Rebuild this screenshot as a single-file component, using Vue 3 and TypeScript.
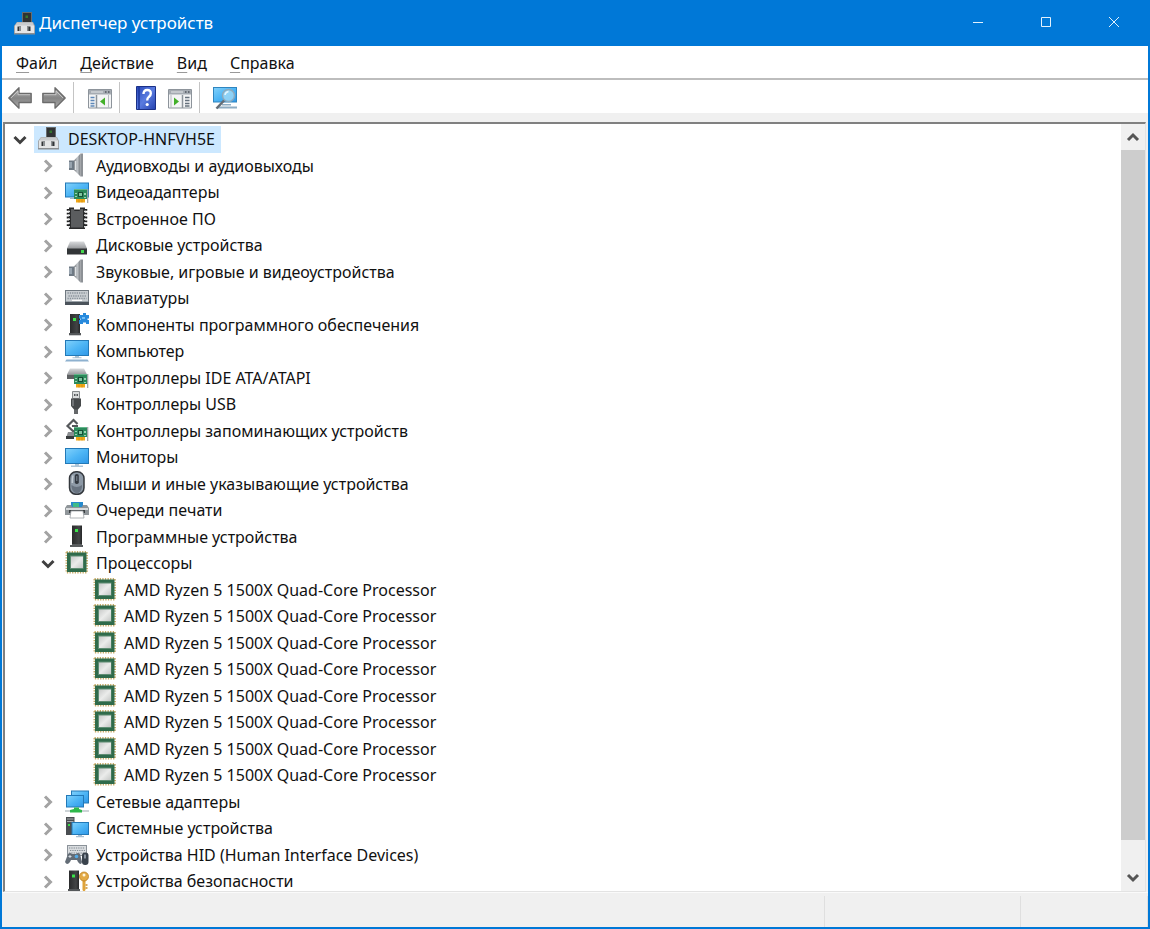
<script setup lang="ts">
import { computed, ref } from 'vue'

interface Category {
  label: string
  icon: string
  children?: string[]
}

interface Row {
  key: string
  label: string
  icon: string
  level: number
  expandable: boolean
  expanded: boolean
}

const rootName = 'DESKTOP-HNFVH5E'
const cpuName = 'AMD Ryzen 5 1500X Quad-Core Processor'

const categories: Category[] = [
  { label: 'Аудиовходы и аудиовыходы', icon: 'speaker' },
  { label: 'Видеоадаптеры', icon: 'video' },
  { label: 'Встроенное ПО', icon: 'firmware' },
  { label: 'Дисковые устройства', icon: 'disk' },
  { label: 'Звуковые, игровые и видеоустройства', icon: 'speaker' },
  { label: 'Клавиатуры', icon: 'keyboard' },
  { label: 'Компоненты программного обеспечения', icon: 'component' },
  { label: 'Компьютер', icon: 'computer' },
  { label: 'Контроллеры IDE ATA/ATAPI', icon: 'ide' },
  { label: 'Контроллеры USB', icon: 'usb' },
  { label: 'Контроллеры запоминающих устройств', icon: 'storage' },
  { label: 'Мониторы', icon: 'monitor' },
  { label: 'Мыши и иные указывающие устройства', icon: 'mouse' },
  { label: 'Очереди печати', icon: 'printer' },
  { label: 'Программные устройства', icon: 'software' },
  { label: 'Процессоры', icon: 'cpu', children: Array.from({ length: 8 }, () => cpuName) },
  { label: 'Сетевые адаптеры', icon: 'network' },
  { label: 'Системные устройства', icon: 'system' },
  { label: 'Устройства HID (Human Interface Devices)', icon: 'hid' },
  { label: 'Устройства безопасности', icon: 'security' },
]

const menus = [
  { key: 'Ф', rest: 'айл' },
  { key: 'Д', rest: 'ействие' },
  { key: 'В', rest: 'ид' },
  { key: 'С', rest: 'правка' },
]

const open = ref<Set<string>>(new Set(['root', 'Процессоры']))
const selected = ref('root')
const viewport = ref<HTMLElement | null>(null)

const rows = computed<Row[]>(() => {
  const rootOpen = open.value.has('root')
  const list: Row[] = [
    { key: 'root', label: rootName, icon: 'root', level: 0, expandable: true, expanded: rootOpen },
  ]
  if (!rootOpen) return list
  for (const c of categories) {
    const expanded = open.value.has(c.label)
    list.push({ key: c.label, label: c.label, icon: c.icon, level: 1, expandable: true, expanded })
    if (expanded && c.children) {
      c.children.forEach((name, i) =>
        list.push({ key: `${c.label}-${i}`, label: name, icon: c.icon, level: 2, expandable: false, expanded: false }),
      )
    }
  }
  return list
})

function toggle(key: string): void {
  const next = new Set(open.value)
  if (next.has(key)) next.delete(key)
  else next.add(key)
  open.value = next
}

function scrollTree(delta: number): void {
  viewport.value?.scrollBy({ top: delta })
}
</script>

<template>
  <svg class="defs" aria-hidden="true">
    <defs>
      <linearGradient id="g-screen" x1="0" y1="0" x2="1" y2="1">
        <stop offset="0" stop-color="#7fd0fb" />
        <stop offset="0.5" stop-color="#4db5f5" />
        <stop offset="1" stop-color="#3199e8" />
      </linearGradient>
      <linearGradient id="g-metal" x1="0" y1="0" x2="1" y2="0">
        <stop offset="0" stop-color="#6f7378" />
        <stop offset="0.5" stop-color="#c3c7cb" />
        <stop offset="1" stop-color="#74787d" />
      </linearGradient>
      <linearGradient id="g-plate" x1="0" y1="0" x2="0" y2="1">
        <stop offset="0" stop-color="#d9dbdd" />
        <stop offset="1" stop-color="#97999c" />
      </linearGradient>
      <linearGradient id="g-die" x1="0" y1="0" x2="1" y2="1">
        <stop offset="0" stop-color="#c8cac9" />
        <stop offset="0.5" stop-color="#ebeceb" />
        <stop offset="1" stop-color="#c4c7c5" />
      </linearGradient>
      <linearGradient id="g-tower" x1="0" y1="0" x2="1" y2="0">
        <stop offset="0" stop-color="#2a2b2c" />
        <stop offset="0.7" stop-color="#434546" />
        <stop offset="1" stop-color="#252627" />
      </linearGradient>
      <linearGradient id="g-arrow" x1="0" y1="0" x2="0" y2="1">
        <stop offset="0" stop-color="#b8b8b8" />
        <stop offset="0.5" stop-color="#858585" />
        <stop offset="1" stop-color="#a9a9a9" />
      </linearGradient>
      <linearGradient id="g-help" x1="0" y1="0" x2="1" y2="1">
        <stop offset="0" stop-color="#2646b8" />
        <stop offset="0.5" stop-color="#5a7ce0" />
        <stop offset="1" stop-color="#2340ad" />
      </linearGradient>
    </defs>

    <symbol id="i-card" viewBox="0 0 15 14">
      <path d="M0 0h13v10H0z" fill="#2c8a5b" />
      <path d="M0 0h13v1H0z" fill="#63b68b" />
      <path d="M4 3h5v5H4z" fill="#174f37" />
      <path d="M5 4h3v3H5z" fill="#7ec6a0" />
      <path d="M1 4h2v1H1zM1 7h2v1H1zM10 4h2v2h-2zM10 8h2v1h-2z" fill="#9bd2b2" />
      <path d="M2 10h9v3.500H2z" fill="#f0a818" />
      <path d="M5 10.500v3M8 10.500v3" stroke="#cf860c" stroke-width=".7" />
      <path d="M13.700 0v14" stroke="#9a9da0" stroke-width="1.200" />
    </symbol>

    <symbol id="i-root" viewBox="0 0 24 24">
      <path d="M9 1h10v12H9z" fill="#6a6d6e" />
      <path d="M10 2h8v11h-8z" fill="#303334" />
      <path d="M12.500 4.500h2.500v2.500h-2.500z" fill="#35772f" />
      <path d="M4 11h16l2 4v8H1v-8z" fill="#a4a8ab" />
      <path d="M4 11.500h15.500L21 15H2z" fill="#c9ccce" />
      <path d="M2 14.500h19V22H2z" fill="#e3e5e6" />
      <path d="M1 22h21v1.500H1z" fill="#8a8e91" />
      <path d="M4.500 15.500h3.500V20H4.500zM14 15.500h3.500V20H14z" fill="#303437" />
      <path d="M6 15.500h2V20H6zM14 15.500h1.500V20H14z" fill="#8b8f92" />
    </symbol>

    <symbol id="i-speaker" viewBox="0 0 24 24">
      <path d="M4 7.500h5v9.500H4z" fill="#6e7984" />
      <path d="M4 9h3v6H4z" fill="#98a4af" />
      <path d="M9 7.500 15.500.5v23L9 17z" fill="url(#g-metal)" />
      <path d="M15.500.5H18v23h-2.500z" fill="#8d9196" />
      <path d="M10.500 8v9" stroke="#dfe3e6" stroke-width="1.500" />
    </symbol>

    <symbol id="i-monitor" viewBox="0 0 24 24">
      <path d="M0 4h24v16H0z" fill="#2379b7" />
      <path d="M1 5h22v14H1z" fill="url(#g-screen)" />
      <path d="M10 20h4v1.500h4V23H6v-1.500h4z" fill="#adc5d8" />
    </symbol>

    <symbol id="i-computer" viewBox="0 0 24 24">
      <path d="M0 2h24v16H0z" fill="#2379b7" />
      <path d="M1 3h22v14H1z" fill="url(#g-screen)" />
      <path d="M10 18h4v1.200h2.500v1H7.500v-1H10z" fill="#a9bfd1" />
      <path d="M1.500 21.500h21l1.500 2H0z" fill="#8eb1cf" />
    </symbol>

    <symbol id="i-video" viewBox="0 0 24 24">
      <path d="M0 3.500h24v15H0z" fill="#2379b7" />
      <path d="M1 4.500h22v13H1z" fill="url(#g-screen)" />
      <path d="M5 19h5v1H5z" fill="#9eb9cc" />
      <use href="#i-card" x="9" y="10" width="15" height="14" />
    </symbol>

    <symbol id="i-firmware" viewBox="0 0 24 24">
      <path d="M4 1.500h5v2h6v-2h5V23H4z" fill="#2a2b2c" />
      <path d="M6 3h2.500l1 2h5l1-2H18v18.500H6z" fill="#5b5d5f" />
      <path d="M3 3v19M21 3v19" fill="none" stroke="#202122" stroke-width="2.500" stroke-dasharray="1.800 2" />
      <path d="M4 4.800v17M20 4.800v17" fill="none" stroke="#e3e5e6" stroke-width="2" stroke-dasharray="1.500 2.300" />
    </symbol>

    <symbol id="i-disk" viewBox="0 0 24 24">
      <path d="M5 9.500h14l3 7H2z" fill="url(#g-plate)" />
      <path d="M2 16h20v6.500H2z" fill="#323537" />
      <path d="M2 16h20v1H2z" fill="#66696b" />
      <path d="M16 18h3v3h-3z" fill="#44d84e" />
    </symbol>

    <symbol id="i-keyboard" viewBox="0 0 24 24">
      <path d="M0 5h24v15H0z" fill="#6f7880" />
      <path d="M1 6h22v10.500H1z" fill="#c9ced2" />
      <path d="M2.500 8h19M3.500 11h17.500M2.500 13.500h19" stroke="#8a939b" stroke-width="1.300" stroke-dasharray="1.300 1" />
      <path d="M7 14.700h10v1.300H7z" fill="#fff" />
      <path d="M0 17h24v3H0z" fill="#4b535b" />
    </symbol>

    <symbol id="i-software" viewBox="0 0 24 24">
      <path d="M7 1.500h10V21H7z" fill="url(#g-tower)" />
      <path d="M5 21h2v-1h10v1h1v2H5z" fill="#595c5e" />
      <path d="M10 5h3v3h-3z" fill="#3be34a" />
    </symbol>

    <symbol id="i-component" viewBox="0 0 24 24">
      <path d="M5 2h10v19H5z" fill="url(#g-tower)" />
      <path d="M4 21h12v2.300H4z" fill="#55585a" />
      <path d="M8 6h3v3H8z" fill="#3be34a" />
      <path d="M14 3h4V1h3v2h3v3.500h-1.500V8H24v4h-3v-1.500h-3V12h-4V8h1.500V6.500H14z" fill="#2789dc" />
      <path d="M17 5h3v2h-3z" fill="#6fbcf4" />
    </symbol>

    <symbol id="i-ide" viewBox="0 0 24 24">
      <path d="M5 3.500h14l3 6H2z" fill="url(#g-plate)" />
      <path d="M2 9.500h20V14H2z" fill="#5d6062" />
      <use href="#i-card" x="9" y="9" width="15" height="14" />
    </symbol>

    <symbol id="i-usb" viewBox="0 0 24 24">
      <path d="M7.500.5h7v7h-7z" fill="#dadcdd" stroke="#85898b" />
      <path d="M9 3h1.500v2H9zM11.500 3H13v2h-1.500z" fill="#55585a" />
      <path d="M6 7.500h10V15l-3 3.500V23H9v-4.500L6 15z" fill="#46494b" />
      <path d="M7 8.500h2V15H7z" fill="#707376" />
      <path d="M9 18.500h4V23H9z" fill="#65686a" />
    </symbol>

    <symbol id="i-storage" viewBox="0 0 24 24">
      <path d="M12.500 6 8.500 2 2.500 8l6 5.500 4-3.500" fill="none" stroke="#55585b" stroke-width="2.200" />
      <path d="M7 8h6" stroke="#55585b" stroke-width="2" />
      <path d="M3 14h6v6H1z" fill="#8b8e91" />
      <path d="M1 18h8v3H1z" fill="#383b3d" />
      <use href="#i-card" x="9" y="9" width="15" height="14" />
    </symbol>

    <symbol id="i-mouse" viewBox="0 0 24 24">
      <rect x="4.500" y=".8" width="14.500" height="22.500" rx="6.500" fill="#8d99a6" stroke="#34383d" stroke-width="1.500" />
      <path d="M6.500 14q5 4 10.500 0v2q-1 6-5.200 6t-5.300-6z" fill="#687380" />
      <path d="M8 4.500Q7 8 7.300 12" fill="none" stroke="#c1cad3" stroke-width="1.500" />
      <rect x="9.800" y="3" width="4" height="10" rx="1.800" fill="#343a42" />
      <path d="M11.800 5v5" stroke="#7f8b98" />
    </symbol>

    <symbol id="i-printer" viewBox="0 0 24 24">
      <path d="M6 5h12v5H6z" fill="#258acd" />
      <path d="M8 6h6v4H8z" fill="#40bb88" />
      <path d="M2 8h4l1 2h10l1-2h4l2 3v7H0v-7z" fill="#8f9599" />
      <path d="M1 11h22v2H1z" fill="#d7dadc" />
      <path d="M4 13h16v3H4z" fill="#3c4144" />
      <path d="M6 14h12l1 7H5z" fill="#fff" stroke="#9ca1a5" stroke-width=".8" />
    </symbol>

    <symbol id="i-cpu" viewBox="0 0 24 24">
      <rect x="1.500" y="2" width="20.500" height="20.500" fill="none" stroke="#c6aa66" stroke-width="2" stroke-dasharray="1.300 1.300" />
      <path d="M2 2.500h19.500V22H2z" fill="#2f6b4b" />
      <path d="M5 5.500h13.500V19H5z" fill="#5f8d73" />
      <path d="M6 6.500h12V18H6z" fill="url(#g-die)" />
    </symbol>

    <symbol id="i-network" viewBox="0 0 24 24">
      <path d="M6 1.500h18v13H6z" fill="#2379b7" />
      <path d="M7 2.500h16v11H7z" fill="url(#g-screen)" />
      <path d="M1 6h18v12.500H1z" fill="#2379b7" />
      <path d="M2 7h16v10.500H2z" fill="url(#g-screen)" />
      <path d="M0 21h24v2H0z" fill="#cdd4d7" />
      <path d="M9 18.500h5V20l3 1v2.500H5V21l4-1z" fill="#2eb84b" />
    </symbol>

    <symbol id="i-system" viewBox="0 0 24 24">
      <path d="M1 2h8.500v18H1z" fill="#4a4e51" />
      <path d="M2 4h6.500M2 6.500h6.500" stroke="#a6abaf" />
      <path d="M3 9h2v2H3z" fill="#39dc49" />
      <path d="M6.500 7H24v13H6.500z" fill="#2379b7" />
      <path d="M7.500 8H23v11H7.500z" fill="url(#g-screen)" />
      <path d="M13 20h4v1h2v1.200h-8V21h2z" fill="#a9bfd1" />
    </symbol>

    <symbol id="i-hid" viewBox="0 0 24 24">
      <path d="M2 3h20v11H2z" fill="#8b9299" />
      <path d="M3 4h18v9H3z" fill="#d9dcdf" />
      <path d="M4 6h16M5 8.500h15M4 11h16" stroke="#838b93" stroke-width="1.200" stroke-dasharray="1.300 1" />
      <path d="M3 12q2-2 4 0h4q2-2 4 0l2 8q-1 4-4 0l-1-2H6l-1 2q-3 4-5 0z" fill="#636c76" />
      <path d="M3.500 14.500h3M5 13v3" stroke="#d5dbe1" />
      <circle cx="11.500" cy="14.500" r="1.800" fill="#53a9e5" />
      <rect x="17" y="10.500" width="6.500" height="12.500" rx="3" fill="#39424c" />
      <path d="M20 12.500v4" stroke="#a3aeb9" stroke-width="1.500" />
    </symbol>

    <symbol id="i-security" viewBox="0 0 24 24">
      <path d="M4 2.500h10V22H4z" fill="url(#g-tower)" />
      <path d="M3 21h12v2H3z" fill="#55585a" />
      <path d="M7 6.500h3v3H7z" fill="#3be34a" />
      <path d="M17.500 11h3v11l-1.500 2-1.500-2z" fill="#e0a43a" />
      <circle cx="19" cy="8.500" r="4.500" fill="#e3aa46" stroke="#bd7f20" stroke-width=".8" />
      <circle cx="19" cy="7" r="1.500" fill="#fff6df" />
      <path d="M20.500 17h2M20.500 20h2" stroke="#c98d29" stroke-width="1.500" />
    </symbol>

    <symbol id="i-back" viewBox="0 0 24 24">
      <path d="M.8 12 11 1.800V7.500h12.200v9H11v5.700z" fill="url(#g-arrow)" stroke="#6b6b6b" stroke-width="1.300" stroke-linejoin="round" />
      <path d="M3 12l7-7v3.700h12" fill="none" stroke="#d0d0d0" stroke-width=".8" />
    </symbol>

    <symbol id="i-panel" viewBox="0 0 24 24">
      <path d="M.5 3.500h23v18.500H.5z" fill="#f4f5f6" stroke="#8d949b" />
      <path d="M1 4h22v4.500H1z" fill="#a5abb2" />
      <path d="M3 6h12" stroke="#e4e7e9" />
      <path d="M17 6h1.500M20 6h1.500" stroke="#4f565e" stroke-width="1.500" />
      <path d="M8.500 9v13" stroke="#8d949b" stroke-width="1.500" />
      <path d="M2.500 11.500h4M2.500 14.500h4M2.500 17.500h4M2.500 20h4" stroke="#5c87b8" stroke-width="1.300" />
      <path d="M17 11.500v8l-5-4z" fill="#43b02a" />
      <path d="M20.500 9v13" stroke="#b7bcc1" />
    </symbol>

    <symbol id="i-panel-right" viewBox="0 0 24 24">
      <path d="M.5 3.500h23v18.500H.5z" fill="#f4f5f6" stroke="#8d949b" />
      <path d="M1 4h22v4.500H1z" fill="#a5abb2" />
      <path d="M3 6h12" stroke="#e4e7e9" />
      <path d="M17 6h1.500M20 6h1.500" stroke="#4f565e" stroke-width="1.500" />
      <path d="M14.500 9v13" stroke="#8d949b" stroke-width="1.500" />
      <path d="M17 11.500h4.500M17 14.500h4.500M17 17.500h4.500M17 20h4.500" stroke="#65717c" stroke-width="1.300" />
      <path d="M6 11.500v8l5-4z" fill="#43b02a" />
      <path d="M3 9v13" stroke="#b7bcc1" />
    </symbol>

    <symbol id="i-help" viewBox="0 0 24 24">
      <path d="M2.500.5h19v23h-19z" fill="url(#g-help)" stroke="#1b3188" />
      <path d="M5 1v22" stroke="#1d379d" stroke-width="1.500" />
      <path d="M9.500 8q0-4 3.700-4t3.600 3.500q0 2-2 3.400-1.600 1.200-1.600 3.600" fill="none" stroke="#fff" stroke-width="2.400" />
      <circle cx="13.200" cy="18.500" r="1.600" fill="#fff" />
    </symbol>

    <symbol id="i-scan" viewBox="0 0 24 24">
      <path d="M0 1h24v15.500H0z" fill="#2f85bf" />
      <path d="M1 2h22v13.500H1z" fill="url(#g-screen)" />
      <path d="M9 18h9v1.500H9zM5 20.500h19v2H3z" fill="#8eacc2" />
      <path d="m11.500 14-8 8.500" stroke="#646d76" stroke-width="2.500" />
      <circle cx="15.500" cy="9.500" r="6" fill="#a5ddf8" fill-opacity=".75" stroke="#8daabd" stroke-width="1.500" />
      <path d="M12 9q.5-3 3.500-3.500" fill="none" stroke="#e4f6ff" stroke-width="1.500" />
    </symbol>
  </svg>

  <div class="window">
    <header class="titlebar">
      <svg class="icon" aria-hidden="true"><use href="#i-root" /></svg>
      <h1 class="title">Диспетчер устройств</h1>
      <div class="controls">
        <button type="button" aria-label="Свернуть">
          <svg viewBox="0 0 12 12"><path d="M1 6.500h10" /></svg>
        </button>
        <button type="button" aria-label="Развернуть">
          <svg viewBox="0 0 12 12"><path d="M1.500 1.500h9v9h-9z" /></svg>
        </button>
        <button type="button" aria-label="Закрыть">
          <svg viewBox="0 0 12 12"><path d="m1 1 10 10M11 1 1 11" /></svg>
        </button>
      </div>
    </header>

    <nav class="menubar">
      <button v-for="m in menus" :key="m.key" type="button"><span class="access">{{ m.key }}</span>{{ m.rest }}</button>
    </nav>

    <div class="toolbar" role="toolbar">
      <div class="group first">
        <button type="button" aria-label="Назад"><svg class="icon"><use href="#i-back" /></svg></button>
        <button type="button" aria-label="Вперёд"><svg class="icon flip"><use href="#i-back" /></svg></button>
      </div>
      <div class="group">
        <button type="button" aria-label="Показать дерево консоли"><svg class="icon"><use href="#i-panel" /></svg></button>
      </div>
      <div class="group">
        <button type="button" aria-label="Справка"><svg class="icon"><use href="#i-help" /></svg></button>
        <button type="button" aria-label="Показать панель действий"><svg class="icon"><use href="#i-panel-right" /></svg></button>
      </div>
      <div class="group last">
        <button type="button" aria-label="Обновить конфигурацию оборудования"><svg class="icon"><use href="#i-scan" /></svg></button>
      </div>
    </div>

    <main class="pane">
      <ul ref="viewport" class="tree" role="tree">
        <li
          v-for="row in rows"
          :key="row.key"
          class="row"
          :class="'level-' + row.level"
          role="treeitem"
          :aria-level="row.level + 1"
          :aria-expanded="row.expandable ? row.expanded : undefined"
          :aria-selected="selected === row.key"
        >
          <button
            v-if="row.expandable"
            type="button"
            class="expander"
            :class="{ expanded: row.expanded }"
            :aria-label="row.expanded ? 'Свернуть' : 'Развернуть'"
            @click="toggle(row.key)"
          >
            <svg v-if="row.expanded" viewBox="0 0 14 14"><path d="m1.500 4 5.500 5.500L12.500 4" /></svg>
            <svg v-else viewBox="0 0 14 14"><path d="m4 1.500 5.500 5.500L4 12.500" /></svg>
          </button>
          <span v-else class="expander"></span>
          <button type="button" class="item" :class="{ selected: selected === row.key }" @click="selected = row.key">
            <svg class="icon" aria-hidden="true"><use :href="'#i-' + row.icon" /></svg>
            <span>{{ row.label }}</span>
          </button>
        </li>
      </ul>
      <div class="scrollbar">
        <button type="button" aria-label="Вверх" @click="scrollTree(-53)">
          <svg viewBox="0 0 14 14"><path d="m2 10 5-5 5 5" /></svg>
        </button>
        <div class="track"><div class="thumb"></div></div>
        <button type="button" aria-label="Вниз" @click="scrollTree(53)">
          <svg viewBox="0 0 14 14"><path d="m2 4 5 5 5-5" /></svg>
        </button>
      </div>
    </main>

    <footer class="statusbar">
      <div class="status-main"></div>
      <div class="status-mid"></div>
      <div class="status-end"></div>
    </footer>
  </div>
</template>

<style>
html,
body,
#app {
  height: 100%;
  margin: 0;
}
</style>

<style scoped>
.defs {
  position: absolute;
  width: 0;
  height: 0;
}

.window {
  box-sizing: border-box;
  height: 100%;
  display: flex;
  flex-direction: column;
  overflow: hidden;
  border: 2px solid #0078d7;
  border-top: 0;
  background: #f0f0f0;
  color: #111;
  font-family: 'Noto Sans', 'Open Sans', sans-serif;
  font-size: 16px;
  line-height: 24px;
}

button {
  margin: 0;
  padding: 0;
  border: 0;
  background: none;
  color: inherit;
  font: inherit;
}

.icon {
  display: block;
  flex: none;
  width: 24px;
  height: 24px;
}

.flip {
  transform: scaleX(-1);
}

.titlebar {
  flex: none;
  display: flex;
  align-items: center;
  height: 46px;
  padding-left: 11px;
  background: #0078d7;
  color: #fff;
}

.title {
  margin: 0 0 0 2px;
  font-size: 17px;
  font-weight: 400;
}

.controls {
  display: flex;
  align-self: stretch;
  margin-left: auto;
}

.controls button {
  display: flex;
  align-items: center;
  justify-content: center;
  width: 68px;
  height: 44px;
}

.controls svg {
  width: 12px;
  height: 12px;
  fill: none;
  stroke: #e3f1fc;
  stroke-width: 1;
}

.menubar {
  flex: none;
  display: flex;
  gap: 23px;
  height: 32px;
  padding: 0 14px;
  border-bottom: 2px solid #bdbdbd;
  background: #fff;
}

.menubar button {
  height: 34px;
}

.access {
  text-decoration: underline;
  text-decoration-color: #999;
  text-decoration-thickness: 1px;
  text-underline-offset: 3px;
}

.toolbar {
  flex: none;
  display: flex;
  height: 33px;
  background: #fff;
}

.group {
  display: flex;
  align-items: center;
  gap: 10px;
  margin: 2px 0 0;
  padding: 0 7px 0 14px;
  border-right: 1px solid #c4c4c4;
}

.first {
  padding-left: 6px;
}

.last {
  padding-left: 13px;
  border-right: 0;
}

.pane {
  flex: 1;
  min-height: 0;
  display: flex;
  margin: 9px 2px 0 1px;
  border: 2px solid #808080;
  border-right: 1px solid #e3e3e3;
  border-bottom: 1px solid #e3e3e3;
  background: #fff;
}

.tree {
  flex: 1;
  margin: 0;
  padding: 2px 0 0;
  overflow-y: auto;
  scrollbar-width: none;
  list-style: none;
}

.row {
  display: flex;
  height: 26px;
  padding-left: 5px;
}

.row:nth-child(odd) {
  height: 27px;
}

.level-1 {
  padding-left: 33px;
}

.level-2 {
  padding-left: 61px;
}

.expander {
  flex: none;
  display: flex;
  align-items: center;
  justify-content: center;
  width: 20px;
  margin-right: 4px;
}

.expander svg {
  width: 14px;
  height: 14px;
  fill: none;
  stroke: #a3a3a3;
  stroke-width: 3;
}

.expander.expanded svg {
  stroke: #404040;
}

.item {
  display: flex;
  align-items: flex-start;
  gap: 7px;
  padding: 0 6px 0 3px;
  white-space: nowrap;
}

.item span {
  line-height: 26px;
}

.selected {
  background: #cce8ff;
}

.scrollbar {
  flex: none;
  display: flex;
  flex-direction: column;
  width: 24px;
  background: #f0f0f0;
}

.scrollbar button {
  flex: none;
  display: flex;
  align-items: center;
  justify-content: center;
  height: 26px;
}

.scrollbar svg {
  width: 14px;
  height: 14px;
  fill: none;
  stroke: #555;
  stroke-width: 3;
}

.track {
  flex: 1;
}

.thumb {
  height: calc(100% - 25px);
  background: #cdcdcd;
}

.statusbar {
  flex: none;
  display: flex;
  height: 31px;
  padding-top: 3px;
  border-top: 1px solid #fafafa;
}

.status-main {
  flex: 1;
}

.status-mid {
  width: 17%;
  border-left: 1px solid #dfdfdf;
}

.status-end {
  width: 11%;
  border-left: 1px solid #dfdfdf;
  border-right: 1px solid #dfdfdf;
}
</style>
